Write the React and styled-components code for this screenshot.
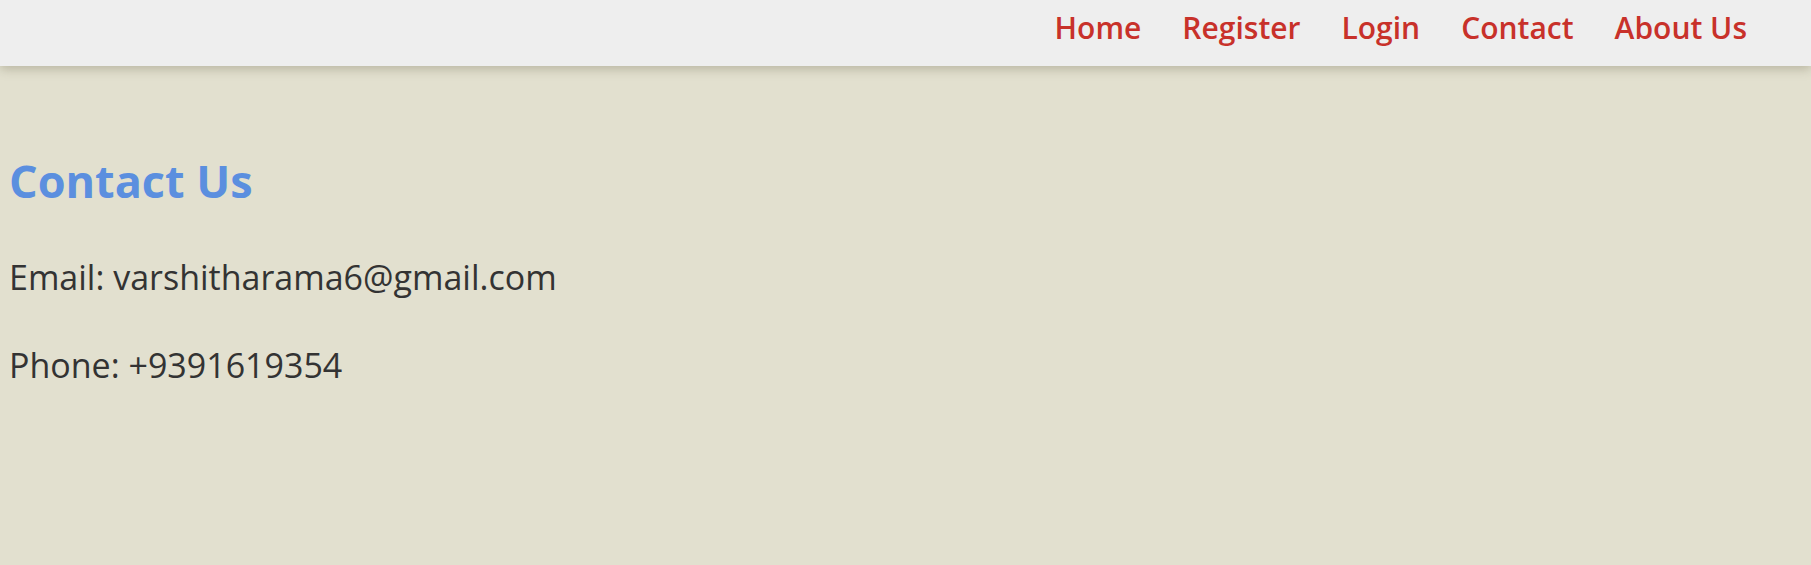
import React from 'react'
import styled, { createGlobalStyle } from 'styled-components'

const GlobalStyle = createGlobalStyle`
  html, body {
    margin: 0;
    padding: 0;
    background: #e2e0cf;
    font-family: 'Open Sans', 'Noto Sans', sans-serif;
  }
  body {
    min-height: 565px;
  }
`

const Navbar = styled.nav`
  height: 66px;
  box-sizing: border-box;
  padding: 8px 64px 0 0;
  background: #eeeeee;
  box-shadow: 0 3px 10px rgba(120, 115, 90, 0.4);
  display: flex;
  justify-content: flex-end;
  align-items: flex-start;
  gap: 41px;
  position: relative;
`

const NavLink = styled.a`
  font-size: 30px;
  line-height: 40px;
  font-weight: 600;
  color: #c8312a;
  text-decoration: none;
  cursor: pointer;
`

const Main = styled.main`
  padding: 85px 9px 0 9px;
`

const Title = styled.h1`
  margin: 0 0 43px 0;
  font-size: 45px;
  line-height: 60px;
  font-weight: 700;
  color: #5b8fdf;
`

const Line = styled.p`
  margin: 0 0 42px 0;
  font-size: 34px;
  line-height: 46px;
  color: #333333;
`

const links = ['Home', 'Register', 'Login', 'Contact', 'About Us']

const App = () => {
  return (
    <>
      <GlobalStyle />
      <Navbar>
        {links.map((l) => (
          <NavLink key={l}>{l}</NavLink>
        ))}
      </Navbar>
      <Main>
        <Title>Contact Us</Title>
        <Line>Email: varshitharama6@gmail.com</Line>
        <Line>Phone: +9391619354</Line>
      </Main>
    </>
  )
}

export default App
